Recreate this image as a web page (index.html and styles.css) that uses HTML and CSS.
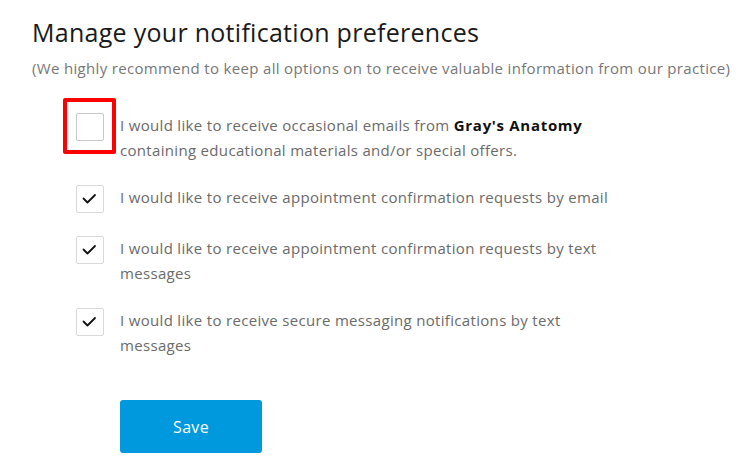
FILE: index.html
```html
<!DOCTYPE html>
<html lang="en">
<head>
<meta charset="utf-8">
<title>Notification preferences</title>
<link rel="stylesheet" href="styles.css">
</head>
<body>
<main class="page">
  <h1 class="title">Manage your notification preferences</h1>
  <p class="subtitle">(We highly recommend to keep all options on to receive valuable information from our practice)</p>
  <ul class="options">
    <li class="option">
      <span class="box box-empty"><span class="highlight"></span></span>
      <span class="label">I would like to receive occasional emails from <b>Gray's Anatomy</b><br>containing educational materials and/or special offers.</span>
    </li>
    <li class="option">
      <span class="box"><svg class="check" viewBox="0 0 26 26"><path d="M6.5 12.5 L10.5 16.5 L18 9"/></svg></span>
      <span class="label">I would like to receive appointment confirmation requests by email</span>
    </li>
    <li class="option">
      <span class="box"><svg class="check" viewBox="0 0 26 26"><path d="M6.5 12.5 L10.5 16.5 L18 9"/></svg></span>
      <span class="label">I would like to receive appointment confirmation requests by text<br>messages</span>
    </li>
    <li class="option">
      <span class="box"><svg class="check" viewBox="0 0 26 26"><path d="M6.5 12.5 L10.5 16.5 L18 9"/></svg></span>
      <span class="label">I would like to receive secure messaging notifications by text<br>messages</span>
    </li>
  </ul>
  <button class="save" type="button">Save</button>
</main>
</body>
</html>
```
FILE: styles.css
```css
html, body {
  margin: 0;
  padding: 0;
  background: #ffffff;
}
body {
  font-family: "Open Sans", "Liberation Sans", sans-serif;
}
.page {
  padding: 15px 0 0 32px;
}
.title {
  margin: 0;
  font-size: 25px;
  font-weight: 400;
  line-height: 34px;
  letter-spacing: 0.28px;
  color: #1a1a1a;
}
.subtitle {
  margin: 9px 0 0 0;
  font-size: 15px;
  line-height: 20px;
  letter-spacing: 0.33px;
  color: #777777;
}
.options {
  list-style: none;
  margin: 35px 0 0 0;
  padding: 0 0 0 44px;
  display: flex;
  flex-direction: column;
  gap: 23px;
}
.option {
  display: flex;
  align-items: flex-start;
  gap: 16px;
}
.box {
  position: relative;
  flex: 0 0 auto;
  width: 28px;
  height: 28px;
  box-sizing: border-box;
  border: 1px solid #d9d9d9;
  border-radius: 2px;
  background: #fff;
}
.box-empty {
  border-color: #c8c8c8;
}
.highlight {
  position: absolute;
  left: -14px;
  top: -16px;
  width: 53px;
  height: 56px;
  box-sizing: border-box;
  border: 4px solid #ff0000;
  border-radius: 2px;
}
.check {
  display: block;
  width: 26px;
  height: 26px;
}
.check path {
  fill: none;
  stroke: #111;
  stroke-width: 1.8;
  stroke-linecap: round;
  stroke-linejoin: round;
}
.label {
  font-size: 15px;
  line-height: 24.5px;
  letter-spacing: 0.32px;
  color: #6b6b6b;
}
.label b {
  font-weight: 700;
  letter-spacing: 0.7px;
  color: #111;
}
.save {
  margin: 43px 0 0 88px;
  width: 142px;
  height: 53px;
  border: none;
  border-radius: 3px;
  background: #0099dd;
  color: #ffffff;
  font-family: "Open Sans", "Liberation Sans", sans-serif;
  font-size: 16px;
  letter-spacing: 0.3px;
  cursor: pointer;
  display: block;
}
```
